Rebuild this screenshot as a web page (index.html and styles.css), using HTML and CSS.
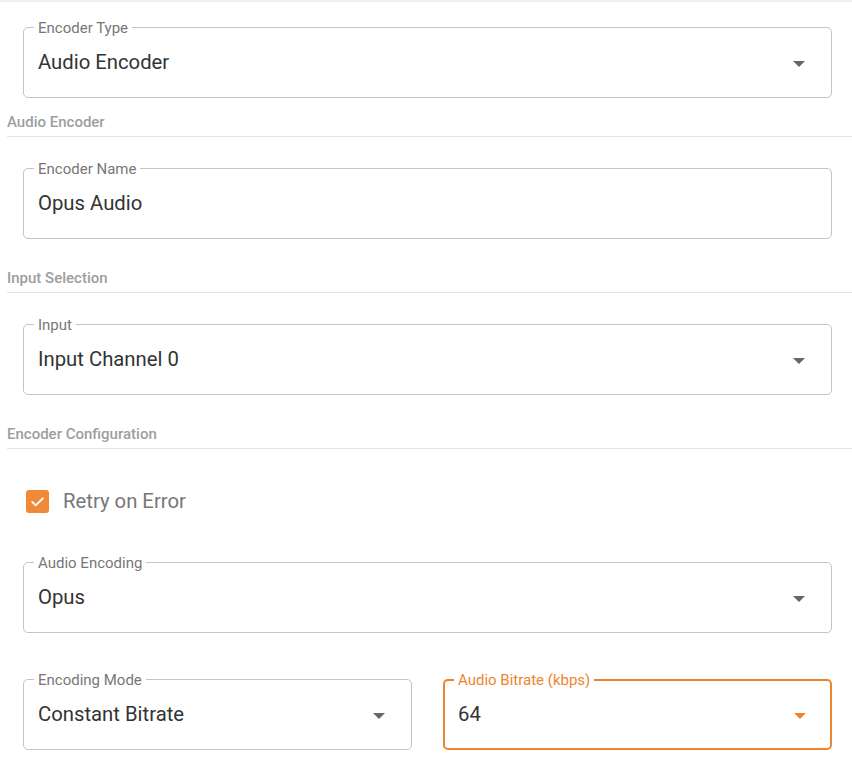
FILE: index.html
```html
<!DOCTYPE html>
<html lang="en">
<head>
    <meta charset="UTF-8">
    <meta name="viewport" content="width=device-width, initial-scale=1.0">
    <title>Audio Encoder</title>
    <link rel="stylesheet" href="styles.css">
</head>
<body>

    <div class="page">
        <div class="field first">
            <span class="label">Encoder Type</span>
            <span class="value">Audio Encoder</span>
            <span class="arrow"></span>
        </div>

        <div class="section">Audio Encoder</div>

        <div class="field">
            <span class="label">Encoder Name</span>
            <span class="value">Opus Audio</span>
        </div>

        <div class="section">Input Selection</div>

        <div class="field">
            <span class="label">Input</span>
            <span class="value">Input Channel 0</span>
            <span class="arrow"></span>
        </div>

        <div class="section">Encoder Configuration</div>

        <label class="check-row">
            <span class="checkbox">
                <svg width="17" height="17" viewBox="0 0 24 24"><path d="M4.5 12.5l5 5 10-10" fill="none" stroke="#fff" stroke-width="2.6" stroke-linecap="round" stroke-linejoin="round"/></svg>
            </span>
            <span class="check-text">Retry on Error</span>
        </label>

        <div class="field encoding">
            <span class="label">Audio Encoding</span>
            <span class="value">Opus</span>
            <span class="arrow"></span>
        </div>

        <div class="field-row">
            <div class="field">
                <span class="label">Encoding Mode</span>
                <span class="value">Constant Bitrate</span>
                <span class="arrow"></span>
            </div>
            <div class="field focused">
                <span class="label">Audio Bitrate (kbps)</span>
                <span class="value">64</span>
                <span class="arrow"></span>
            </div>
        </div>
    </div>

</body>
</html>
```

FILE: styles.css
```css
body {
    font-family: 'Roboto', 'Noto Sans', sans-serif;
    margin: 0;
    padding: 0;
    background: white;
    color: #333;
}
.page {
    border-top: 2px solid #eeeeee;
    padding-left: 7px;
    padding-bottom: 20px;
}
.field {
    position: relative;
    display: flex;
    align-items: center;
    height: 69px;
    margin: 31px 20px 0 16px;
    padding: 0 14px;
    border: 1px solid #c4c4c4;
    border-radius: 5px;
}
.field.first {
    margin-top: 25px;
}
.label {
    position: absolute;
    top: -9px;
    left: 10px;
    padding: 0 4px;
    background: white;
    font-size: 15px;
    line-height: 18px;
    color: #777;
}
.value {
    flex: 1;
    font-size: 20.3px;
    color: #333;
    margin-top: -1px;
}
.arrow {
    width: 0;
    height: 0;
    margin-right: 12px;
    margin-top: 3px;
    border-left: 6px solid transparent;
    border-right: 6px solid transparent;
    border-top: 6px solid #666;
}
.section {
    margin-top: 29px;
    padding-bottom: 4px;
    border-bottom: 1px solid #e4e4e4;
    font-size: 15px;
    line-height: 20px;
    font-weight: 500;
    color: #9e9e9e;
}
.field.first + .section {
    margin-top: 14px;
}
.check-row {
    display: flex;
    align-items: center;
    gap: 14px;
    margin: 40px 0 0 19px;
}
.checkbox {
    display: flex;
    align-items: center;
    justify-content: center;
    width: 23px;
    height: 23px;
    border-radius: 3px;
    background: #ef8a3b;
}
.check-text {
    font-size: 20.3px;
    color: #777;
}
.field.encoding {
    margin-top: 49px;
}
.field-row {
    display: grid;
    grid-template-columns: 1fr 1fr;
    gap: 31px;
    margin: 46px 20px 0 16px;
}
.field-row .field {
    margin: 0;
}
.field.focused {
    border: 2px solid #ec8530;
    padding: 0 13px;
    height: 67px;
}
.field.focused .label {
    top: -10px;
    left: 9px;
    color: #ec8530;
}
.field.focused .arrow {
    margin-right: 11px;
    border-top-color: #ec8530;
}
```
